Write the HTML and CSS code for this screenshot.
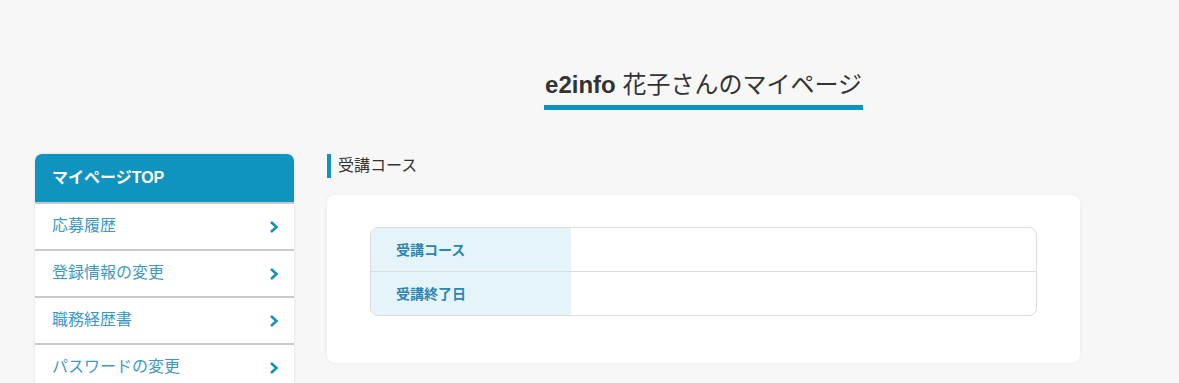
FILE: index.html
```html
<!DOCTYPE html>
<html lang="ja">
<head>
    <meta charset="UTF-8">
    <meta name="viewport" content="width=device-width, initial-scale=1.0">
    <title>マイページ</title>
    <link rel="stylesheet" href="styles.css">
</head>
<body>
    <div class="layout">
        <!-- ページタイトル -->
        <div class="page-title-wrap">
            <h1 class="page-title"><span class="company">e2info</span> 花子さんのマイページ</h1>
        </div>

        <!-- サイドメニュー -->
        <nav class="side-menu">
            <div class="side-menu-head">マイページTOP</div>
            <a class="side-menu-item" href="#">応募履歴<svg class="chev" viewBox="0 0 10 14"><polyline points="2,2 7.5,7 2,12"/></svg></a>
            <a class="side-menu-item" href="#">登録情報の変更<svg class="chev" viewBox="0 0 10 14"><polyline points="2,2 7.5,7 2,12"/></svg></a>
            <a class="side-menu-item" href="#">職務経歴書<svg class="chev" viewBox="0 0 10 14"><polyline points="2,2 7.5,7 2,12"/></svg></a>
            <a class="side-menu-item" href="#">パスワードの変更<svg class="chev" viewBox="0 0 10 14"><polyline points="2,2 7.5,7 2,12"/></svg></a>
        </nav>

        <!-- 受講コース -->
        <main class="main">
            <h2 class="section-title">受講コース</h2>
            <div class="card">
                <table class="info-table">
                    <tr>
                        <th>受講コース</th>
                        <td></td>
                    </tr>
                    <tr>
                        <th>受講終了日</th>
                        <td></td>
                    </tr>
                </table>
            </div>
        </main>
    </div>
</body>
</html>
```

FILE: styles.css
```css
body {
    font-family: "Liberation Sans", "Noto Sans CJK JP", sans-serif;
    background-color: #f7f7f7;
    color: #333333;
    margin: 0;
    padding: 0;
}

.layout {
    display: grid;
    grid-template-columns: 259px 753px;
    column-gap: 33px;
    padding-left: 35px;
}

.page-title-wrap {
    grid-column: 2;
    text-align: center;
    padding-top: 70px;
    margin-bottom: 44px;
}

.page-title {
    display: inline-block;
    margin: 0;
    font-size: 24px;
    line-height: 30px;
    font-weight: normal;
    color: #333333;
    padding: 0 1px 5px;
    border-bottom: 5px solid #0f93bf;
}

.company {
    font-weight: bold;
}

.side-menu {
    grid-column: 1;
    background-color: white;
    border-radius: 7px 7px 0 0;
    box-shadow: 0 0 3px rgba(0, 0, 0, 0.12);
    overflow: hidden;
}

.side-menu-head {
    background-color: #0f93bf;
    color: white;
    font-size: 16px;
    font-weight: bold;
    height: 48px;
    line-height: 48px;
    padding: 0 17px;
}

.side-menu-item {
    display: flex;
    align-items: center;
    justify-content: space-between;
    height: 47px;
    padding: 0 15px 1px 17px;
    border-top: 2px solid #c9c9c9;
    color: #3f98c4;
    font-size: 16px;
    line-height: 20px;
    box-sizing: border-box;
    text-decoration: none;
}

.chev {
    width: 10px;
    height: 14px;
    fill: none;
    stroke: #1590bd;
    stroke-width: 2.6;
    margin-top: 2px;
}

.main {
    grid-column: 2;
}

.section-title {
    margin: 0 0 17px;
    font-size: 16px;
    font-weight: normal;
    line-height: 24px;
    height: 24px;
    padding-left: 7px;
    border-left: 4px solid #0f93bf;
    color: #333333;
}

.card {
    background-color: white;
    border-radius: 8px;
    box-shadow: 0 0 4px rgba(0, 0, 0, 0.06);
    padding: 32px 43px 47px;
}

.info-table {
    width: 100%;
    border-collapse: separate;
    border-spacing: 0;
    border: 1px solid #dcdcdc;
    border-radius: 8px;
    overflow: hidden;
}

.info-table th,
.info-table td {
    height: 41px;
    padding: 0 0 2px;
}

.info-table tr + tr th,
.info-table tr + tr td {
    border-top: 1px solid #dcdcdc;
}

.info-table th {
    width: 200px;
    background-color: #e4f4f8;
    color: #2c86b1;
    font-size: 14px;
    font-weight: bold;
    text-align: left;
    padding-left: 25px;
    box-sizing: border-box;
}
```
